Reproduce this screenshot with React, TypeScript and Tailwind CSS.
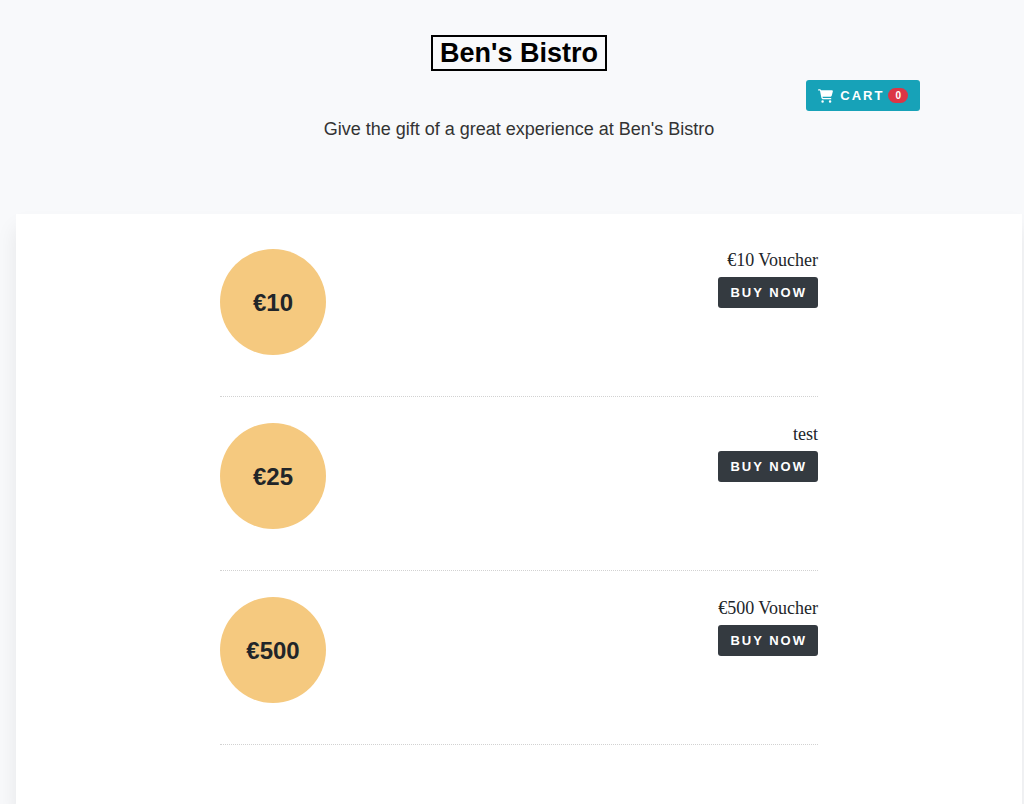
interface Voucher {
  amount: string;
  label: string;
}

const vouchers: Voucher[] = [
  { amount: "€10", label: "€10 Voucher" },
  { amount: "€25", label: "test" },
  { amount: "€500", label: "€500 Voucher" },
];

function CartIcon() {
  return (
    <svg viewBox="0 0 576 512" className="w-[15px] h-[14px]" fill="currentColor" aria-hidden="true">
      <path d="M0 24C0 10.700 10.700 0 24 0h45.500c22 0 41.500 12.800 50.600 32h411c26.300 0 45.500 25 38.600 50.400l-41 152.300c-8.500 31.400-37 53.300-69.500 53.300H170.700l5.400 28.500c2.200 11.300 12.100 19.500 23.600 19.500H488c13.300 0 24 10.700 24 24s-10.700 24-24 24H199.700c-34.600 0-64.300-24.600-70.700-58.500L77.400 54.500c-.7-3.800-4-6.500-7.900-6.500H24C10.700 48 0 37.300 0 24zM128 464a48 48 0 1 1 96 0 48 48 0 1 1-96 0zm336-48a48 48 0 1 1 0 96 48 48 0 1 1 0-96z" />
    </svg>
  );
}

function VoucherRow({ amount, label }: Voucher) {
  return (
    <li className="flex items-start justify-between h-[174px] pt-[26px] border-b border-dotted border-[#d2d2d2]">
      <div className="flex items-center justify-center w-[106px] h-[106px] pt-0.5 rounded-full bg-[#f5c97f] text-2xl font-bold text-[#212529]">
        {amount}
      </div>
      <div className="flex flex-col items-end">
        <p className="mb-[5px] font-['Liberation_Serif',serif] text-lg leading-[23px] text-[#212529]">{label}</p>
        <button
          type="button"
          className="h-[31px] pl-3 pr-[11px] rounded-[3px] bg-[#343a40] text-[13px] font-bold uppercase tracking-[2px] text-white hover:bg-[#23272b]"
        >
          Buy now
        </button>
      </div>
    </li>
  );
}

export default function App() {
  return (
    <div className="flex flex-col min-h-screen overflow-hidden bg-[#f8f9fb] pl-4 pr-0.5 font-['Liberation_Sans',Arial,sans-serif]">
      <header className="flex flex-col items-center h-[214px] pt-[35px]">
        <h1 className="px-[7px] border-2 border-black text-[27px] leading-8 font-bold text-black">Ben's Bistro</h1>
        <div className="flex justify-end w-full mt-[9px] pr-[102px]">
          <button
            type="button"
            className="flex items-center h-[31px] px-3 rounded-[3px] bg-[#17a2b8] text-[13px] font-bold uppercase tracking-[2px] text-white hover:bg-[#138496]"
          >
            <CartIcon />
            <span className="ml-[7px]">Cart</span>
            <span className="ml-1 px-[7px] rounded-full bg-[#dc3545] text-[10px] leading-[15px] tracking-normal">0</span>
          </button>
        </div>
        <p className="mt-[6px] text-lg leading-6 text-[#333333]">Give the gift of a great experience at Ben's Bistro</p>
      </header>

      <main className="grow bg-white shadow-[0_14px_20px_rgba(0,0,0,0.08)]">
        <ul className="w-[598px] max-w-full mx-auto pt-[9px]">
          {vouchers.map((voucher) => (
            <VoucherRow key={voucher.amount} {...voucher} />
          ))}
        </ul>
      </main>
    </div>
  );
}
